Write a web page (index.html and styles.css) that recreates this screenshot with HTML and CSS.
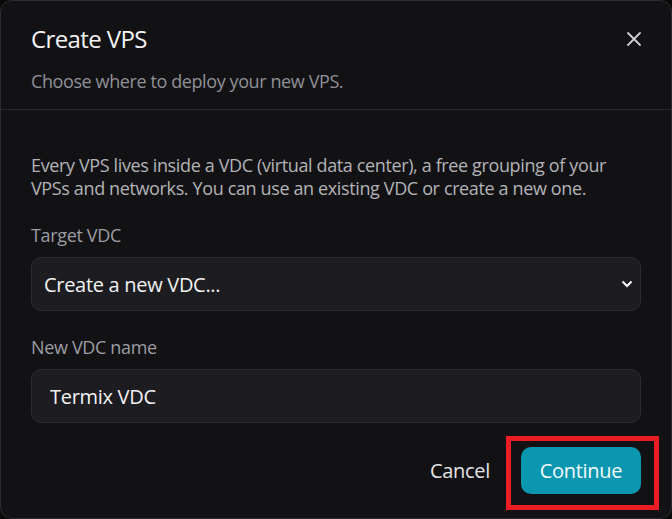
FILE: index.html
```html
<!DOCTYPE html>
<html lang="en">
<head>
    <meta charset="UTF-8">
    <meta name="viewport" content="width=device-width, initial-scale=1.0">
    <title>Create VPS</title>
    <link rel="stylesheet" href="styles.css">
</head>
<body>
    <div class="dialog">
        <div class="dialog-header">
            <div class="title-row">
                <h1>Create VPS</h1>
                <button class="close-btn" aria-label="Close">
                    <svg width="16" height="16" viewBox="0 0 16 16">
                        <path d="M2 2 L14 14 M14 2 L2 14" stroke="currentColor" stroke-width="1.8" stroke-linecap="round" fill="none"/>
                    </svg>
                </button>
            </div>
            <p class="subtitle">Choose where to deploy your new VPS.</p>
        </div>

        <div class="dialog-body">
            <p class="intro">Every VPS lives inside a VDC (virtual data center), a free grouping of your VPSs and networks. You can use an existing VDC or create a new one.</p>

            <label class="field-label" for="targetVdc">Target VDC</label>
            <div class="select-wrap">
                <select id="targetVdc" class="field">
                    <option>Create a new VDC...</option>
                </select>
                <svg class="chevron" width="12" height="8" viewBox="0 0 12 8">
                    <path d="M1.5 1.5 L6 6 L10.5 1.5" stroke="currentColor" stroke-width="2" fill="none"/>
                </svg>
            </div>

            <label class="field-label" for="vdcName">New VDC name</label>
            <input id="vdcName" class="field text-field" type="text" value="Termix VDC">
        </div>

        <div class="dialog-footer">
            <button class="btn-cancel">Cancel</button>
            <button class="btn-primary">Continue</button>
        </div>
    </div>
</body>
</html>
```

FILE: styles.css
```css
* {
    box-sizing: border-box;
}

body {
    margin: 0;
    height: 100vh;
    background-color: #0a0a0b;
    font-family: 'Segoe UI', 'Open Sans', sans-serif;
}

.dialog {
    height: 100vh;
    display: flex;
    flex-direction: column;
    background-color: #121214;
    border: 1px solid #2c2c30;
    border-radius: 12px;
}

.dialog-header {
    padding: 23px 29px 16px 30px;
    border-bottom: 1px solid #2a2a2e;
}

.title-row {
    display: flex;
    justify-content: space-between;
    align-items: center;
}

h1 {
    margin: 0;
    font-size: 24px;
    line-height: 29px;
    font-weight: 400;
    color: #f4f4f5;
    letter-spacing: -0.6px;
}

.close-btn {
    background: none;
    border: none;
    padding: 0;
    width: 16px;
    height: 16px;
    color: #d0d0d4;
    cursor: pointer;
    display: flex;
}

.subtitle {
    margin: 16px 0 0;
    font-size: 18px;
    line-height: 24px;
    color: #909097;
    letter-spacing: -0.4px;
}

.dialog-body {
    padding: 44px 30px 0;
    display: flex;
    flex-direction: column;
}

.intro {
    margin: 0 0 24px;
    font-size: 18px;
    line-height: 23px;
    color: #b2b2b7;
    letter-spacing: -0.37px;
}

.field-label {
    font-size: 18px;
    line-height: 23px;
    color: #9c9ca2;
    letter-spacing: -0.35px;
    margin-bottom: 10px;
}

.select-wrap {
    position: relative;
    margin-bottom: 25px;
}

.field {
    width: 100%;
    height: 54px;
    background-color: #1d1d21;
    border: 1px solid #2b2b30;
    border-radius: 10px;
    color: #f2f2f3;
    font-family: inherit;
    font-size: 20px;
    letter-spacing: -0.3px;
    outline: none;
}

select.field {
    appearance: none;
    padding: 0 40px 0 12px;
}

.chevron {
    position: absolute;
    right: 8px;
    top: 23px;
    color: #ffffff;
    pointer-events: none;
}

.text-field {
    padding: 0 18px;
}

.dialog-footer {
    display: flex;
    justify-content: flex-end;
    align-items: center;
    gap: 15px;
    padding: 24px 30px 0;
}

.btn-cancel {
    background: none;
    border: none;
    padding: 0 16px;
    font-family: inherit;
    font-size: 20px;
    color: #e4e4e6;
    letter-spacing: -0.3px;
    cursor: pointer;
}

.btn-primary {
    position: relative;
    width: 120px;
    height: 47px;
    background-color: #0c97b0;
    border: none;
    border-radius: 10px;
    color: #f4fbfc;
    font-family: inherit;
    font-size: 20px;
    letter-spacing: -0.3px;
    cursor: pointer;
}

/* annotation frame around the primary action */
.btn-primary::after {
    content: '';
    position: absolute;
    top: -11px;
    left: -15px;
    right: -18px;
    bottom: -16px;
    border: 5px solid #ec1c24;
}
```
